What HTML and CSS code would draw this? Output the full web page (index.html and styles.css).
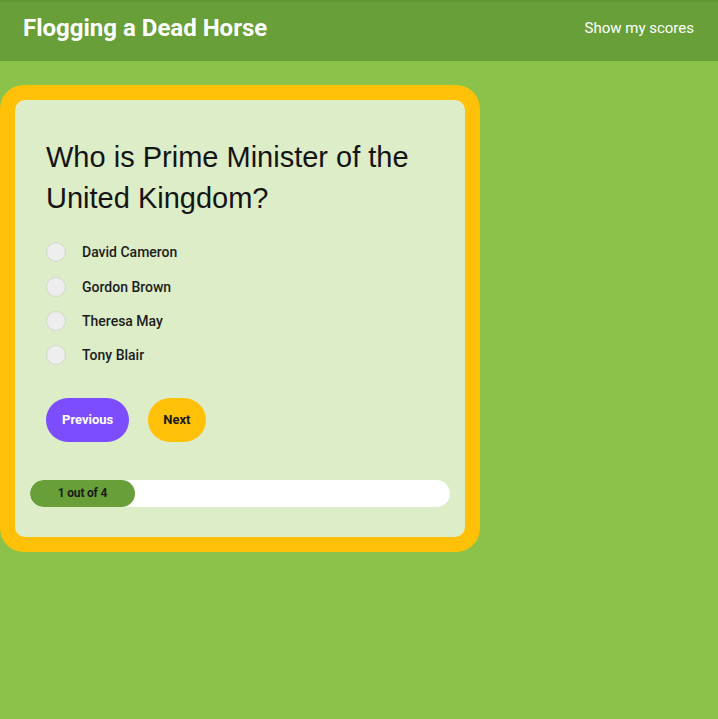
FILE: index.html
```html
<!DOCTYPE html>
<html lang="en">
<head>
<meta charset="utf-8">
<title>Flogging a Dead Horse</title>
<link rel="stylesheet" href="styles.css">
</head>
<body>
<header class="topbar">
  <h1 class="brand">Flogging a Dead Horse</h1>
  <a class="scores-link" href="#">Show my scores</a>
</header>
<main class="page">
  <section class="quiz-frame">
    <div class="quiz-card">
      <div class="question-block">
        <h2 class="question">Who is Prime Minister of the United Kingdom?</h2>
        <ul class="options">
          <li class="option"><span class="radio"></span><span class="option-label">David Cameron</span></li>
          <li class="option"><span class="radio"></span><span class="option-label">Gordon Brown</span></li>
          <li class="option"><span class="radio"></span><span class="option-label">Theresa May</span></li>
          <li class="option"><span class="radio"></span><span class="option-label">Tony Blair</span></li>
        </ul>
        <div class="actions">
          <button class="btn btn-prev">Previous</button>
          <button class="btn btn-next">Next</button>
        </div>
      </div>
      <div class="progress">
        <div class="progress-fill" style="width:25%">1 out of 4</div>
      </div>
    </div>
  </section>
</main>
</body>
</html>
```
FILE: styles.css
```css
html, body {
  margin: 0;
  padding: 0;
}
body {
  background: #8bc34a;
  font-family: Roboto, "Liberation Sans", Arial, sans-serif;
  color: #1a1a1a;
  min-height: 719px;
}
.topbar {
  height: 61px;
  box-sizing: border-box;
  background: #689f38;
  border-top: 2px solid #5e9632;
  display: flex;
  align-items: center;
  justify-content: space-between;
  padding: 0 24px 8px 23px;
}
.brand {
  margin: 0;
  font-family: Roboto, "Liberation Sans", sans-serif;
  font-size: 24px;
  font-weight: 700;
  color: #ffffff;
}
.scores-link {
  color: #ffffff;
  text-decoration: none;
  font-size: 15px;
}
.page {
  padding-top: 24px;
}
.quiz-frame {
  width: 480px;
  box-sizing: border-box;
  background: #ffc107;
  padding: 15px;
  border-radius: 24px;
}
.quiz-card {
  background: #dcedc8;
  border-radius: 10px;
  padding: 0 15px 30px;
}
.question-block {
  padding: 37px 16px 0;
}
.question {
  margin: 0;
  font-family: "Liberation Sans", Arial, sans-serif;
  font-size: 29px;
  line-height: 41px;
  font-weight: 400;
  color: #141414;
}
.options {
  list-style: none;
  margin: 16px 0 0;
  padding: 0;
}
.option {
  height: 34.4px;
  display: flex;
  align-items: center;
  gap: 16px;
}
.radio {
  width: 18px;
  height: 18px;
  border-radius: 50%;
  background: #eeeeee;
  border: 1px solid #d3d8cc;
  flex: none;
}
.option-label {
  font-size: 14px;
  font-weight: 500;
  color: #1c1c1c;
}
.actions {
  display: flex;
  gap: 19px;
  margin-top: 25px;
}
.btn {
  height: 44px;
  border: none;
  border-radius: 22px;
  padding: 0 16px;
  font-family: Roboto, "Liberation Sans", sans-serif;
  font-weight: 700;
  font-size: 13px;
  cursor: pointer;
}
.btn-prev {
  background: #7c4dff;
  color: #ffffff;
}
.btn-next {
  background: #ffc107;
  color: #1a1a1a;
  padding: 0 15px;
}
.progress {
  margin-top: 38px;
  height: 27px;
  background: #ffffff;
  border-radius: 14px;
  overflow: hidden;
}
.progress-fill {
  height: 100%;
  background: #689f38;
  border-radius: 14px;
  display: flex;
  align-items: center;
  justify-content: center;
  font-size: 12px;
  font-weight: 700;
  color: #1a1a1a;
  letter-spacing: -0.2px;
}
```
